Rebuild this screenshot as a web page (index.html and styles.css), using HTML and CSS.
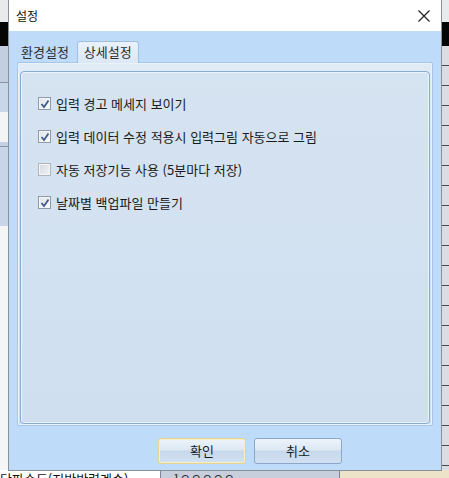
FILE: index.html
```html
<!DOCTYPE html>
<html lang="ko">
<head>
<meta charset="utf-8">
<link rel="stylesheet" href="styles.css">
</head>
<body>
<div class="desk">
  <div class="bg-top"></div>
  <div class="bg-black"></div>
  <div class="bg-left"></div>
  <div class="bg-right"></div>
  <div class="bg-bottom">
    <span class="bg-text">단파손도(지반반력계수)</span>
    <span class="bg-cell">1ㅇㅇㅇㅇㅇ</span>
    <span class="bg-beige"></span>
  </div>

  <div class="dialog">
    <div class="titlebar">
      <span class="title">설정</span>
      <svg class="close" width="12" height="12" viewBox="0 0 12 12"><path d="M0.5 0.5 L11.5 11.5 M11.5 0.5 L0.5 11.5" stroke="#1a1a1a" stroke-width="1.1" fill="none"/></svg>
    </div>
    <div class="body">
      <div class="tabs">
        <span class="tab">환경설정</span>
        <span class="tab active">상세설정</span>
      </div>
      <div class="panel">
        <div class="inner">
          <label class="row"><span class="cb on"><svg width="10" height="10" viewBox="0 0 10 10"><path d="M1.5 5 L4 8 L8.5 1.5" stroke="#3f5a8f" stroke-width="1.8" fill="none"/></svg></span>입력 경고 메세지 보이기</label>
          <label class="row"><span class="cb on"><svg width="10" height="10" viewBox="0 0 10 10"><path d="M1.5 5 L4 8 L8.5 1.5" stroke="#3f5a8f" stroke-width="1.8" fill="none"/></svg></span>입력 데이터 수정 적용시 입력그림 자동으로 그림</label>
          <label class="row"><span class="cb off"></span>자동 저장기능 사용 (5분마다 저장)</label>
          <label class="row"><span class="cb on"><svg width="10" height="10" viewBox="0 0 10 10"><path d="M1.5 5 L4 8 L8.5 1.5" stroke="#3f5a8f" stroke-width="1.8" fill="none"/></svg></span>날짜별 백업파일 만들기</label>
        </div>
      </div>
      <div class="buttons">
        <button class="btn default">확인</button>
        <button class="btn">취소</button>
      </div>
    </div>
  </div>
</div>
</body>
</html>
```
FILE: styles.css
```css
* { box-sizing: border-box; }
html, body { margin: 0; padding: 0; }
body {
  width: 449px; height: 478px; overflow: hidden;
  font-family: "Noto Sans CJK KR", "Noto Sans", sans-serif;
  font-size: 13px; color: #1e1e1e;
  background: #d6dde8;
}
.desk { position: relative; width: 449px; height: 478px; overflow: hidden; }
.bg-top { position: absolute; left: 0; top: 0; width: 449px; height: 22px; background: #e9eaec; }
.bg-black { position: absolute; left: 0; top: 22px; width: 449px; height: 24px; background: #050505; }
.bg-left { position: absolute; left: 0; top: 46px; width: 8px; height: 424px;
  background: linear-gradient(#c3cfe0 0 36px, #8a97aa 36px 37px, #c8d6ea 37px 66px, #f2f4f6 66px 96px, #c4d1e4 96px 100px, #8a97aa 100px 101px, #c8d5e8 101px 180px, #f4f5f7 180px); }
.bg-right { position: absolute; right: 0; top: 46px; width: 8px; height: 424px;
  background: repeating-linear-gradient(#dcdde2 0 19px, #4a4a4a 19px 20px); }
.bg-bottom { position: absolute; left: 0; top: 470px; width: 449px; height: 8px; background: #fff; display: flex; overflow: hidden; }
.bg-text { width: 160px; font-size: 13px; line-height: 16px; margin-top: 1px; white-space: nowrap; color: #111; }
.bg-cell { width: 180px; background: #c7cfdc; border-left: 1px solid #7d8799; border-right: 1px solid #7d8799; font-size: 12px; line-height: 16px; padding-left: 12px; color: #333; }
.bg-beige { flex: 1; background: #ece3c9; }

.dialog {
  position: absolute; left: 8px; top: 0; width: 434px; height: 471px;
  border: 1px solid #8a8f98; border-top: none;
  background: #bfdbfa;
  display: flex; flex-direction: column;
}
.titlebar {
  height: 31px; background: #fff; display: flex; align-items: center;
  justify-content: space-between; padding: 0 9px 0 7px;
}
.title { font-size: 12px; line-height: 16px; color: #111; }
.close { display: block; margin-right: 2px; }
.body { flex: 1; display: flex; flex-direction: column; padding: 9px 8px 0 8px; }
.tabs { display: flex; align-items: flex-end; height: 22px; padding-left: 0; }
.tab { font-size: 13px; line-height: 17px; padding: 0 8px 2px 4px; color: #2a2a2a; }
.tab.active {
  height: 22px; padding: 1px 6px 0 6px;
  border: 1px solid #9ebfe3; border-bottom: none; border-radius: 3px 3px 0 0;
  background: linear-gradient(#eaf2fb, #dbe7f5);
  position: relative; top: 1px;
}
.panel {
  height: 364px; border: 1px solid #a6c6ea; border-radius: 2px;
  background: linear-gradient(#e1ebf6, #d3e2f2 30%, #cfdff0);
  padding: 8px 2px 1px 2px;
  box-shadow: inset 0 0 0 1px #e9f1fa;
}
.inner {
  height: 100%; border: 1px solid #88abd2; border-radius: 4px;
  box-shadow: inset 0 0 0 1px #eaf2fb;
  padding: 23px 0 0 17px;
  display: flex; flex-direction: column; gap: 16px;
  background: linear-gradient(#d6e3f1, #cfdff0);
}
.row { display: flex; align-items: center; height: 17px; line-height: 17px; color: #1a1a1a; white-space: nowrap; }
.cb {
  width: 13px; height: 13px; margin-right: 5px; flex: none;
  border: 1px solid #8f9aa8; background: linear-gradient(135deg, #dfe3e8, #fafbfc);
  display: flex; align-items: center; justify-content: center;
  box-shadow: inset 0 0 0 1px #f4f6f8;
}
.cb.off { border-color: #aeb4bc; background: linear-gradient(135deg, #d4d8de, #f1f3f5); }
.cb svg { display: block; }
.buttons { display: flex; justify-content: flex-end; gap: 8px; padding-top: 12px; padding-right: 91px; }
.btn {
  width: 88px; height: 26px; font-family: inherit; font-size: 13px; color: #1a1a1a;
  border: 1px solid #8aa6c8; border-radius: 3px;
  background: linear-gradient(#edf3fa 0%, #dde8f4 45%, #c7d8ec 50%, #d2e1f1 100%);
  padding: 0; line-height: 16px;
}
.btn.default { border-color: #e6d48c; box-shadow: inset 0 0 0 1px #f6efcc; }
```
